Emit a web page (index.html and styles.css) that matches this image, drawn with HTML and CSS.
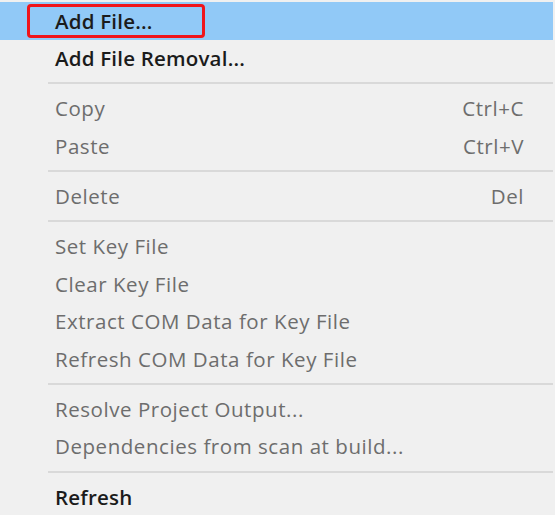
FILE: index.html
```html
<!DOCTYPE html>
<html>
<head>
<meta charset="utf-8">
<link rel="stylesheet" href="styles.css">
</head>
<body>
<div class="menu">
  <div class="item active enabled"><span class="label">Add File...</span></div>
  <div class="item enabled"><span class="label">Add File Removal...</span></div>
  <div class="sep"></div>
  <div class="item"><span class="label">Copy</span><span class="key">Ctrl+C</span></div>
  <div class="item"><span class="label">Paste</span><span class="key">Ctrl+V</span></div>
  <div class="sep"></div>
  <div class="item"><span class="label">Delete</span><span class="key">Del</span></div>
  <div class="sep"></div>
  <div class="item"><span class="label">Set Key File</span></div>
  <div class="item"><span class="label">Clear Key File</span></div>
  <div class="item"><span class="label">Extract COM Data for Key File</span></div>
  <div class="item"><span class="label">Refresh COM Data for Key File</span></div>
  <div class="sep"></div>
  <div class="item"><span class="label">Resolve Project Output...</span></div>
  <div class="item"><span class="label">Dependencies from scan at build...</span></div>
  <div class="sep"></div>
  <div class="item enabled"><span class="label">Refresh</span></div>
</div>
</body>
</html>
```

FILE: styles.css
```css
html, body {
  margin: 0;
  padding: 0;
  background: #f0f0f0;
}
.menu {
  width: 555px;
  height: 515px;
  box-sizing: border-box;
  padding: 2px 2px 0 0;
  background: #f0f0f0;
  font-family: "Open Sans", "Noto Sans", sans-serif;
  font-size: 20.5px;
  letter-spacing: 0.55px;
  color: #6d6d6d;
  overflow: hidden;
}
.item {
  position: relative;
  height: 37.6px;
  display: flex;
  align-items: center;
  justify-content: space-between;
  padding: 0 29px 0 55px;
  box-sizing: border-box;
  line-height: 1;
}
.item.enabled {
  color: #1b1b1b;
  font-weight: 600;
  letter-spacing: 0.2px;
}
.item.active {
  background: #91c9f7;
}
.item.active::before {
  content: "";
  position: absolute;
  left: 27px;
  top: 2px;
  width: 178px;
  height: 34px;
  box-sizing: border-box;
  border: 3px solid #f0141a;
  border-radius: 4px;
}
.label,
.key {
  white-space: nowrap;
}
.sep {
  height: 12.5px;
  display: flex;
  align-items: center;
  margin-left: 48px;
}
.sep::before {
  content: "";
  flex: 1;
  height: 2px;
  background: #d9d9d9;
}
```
